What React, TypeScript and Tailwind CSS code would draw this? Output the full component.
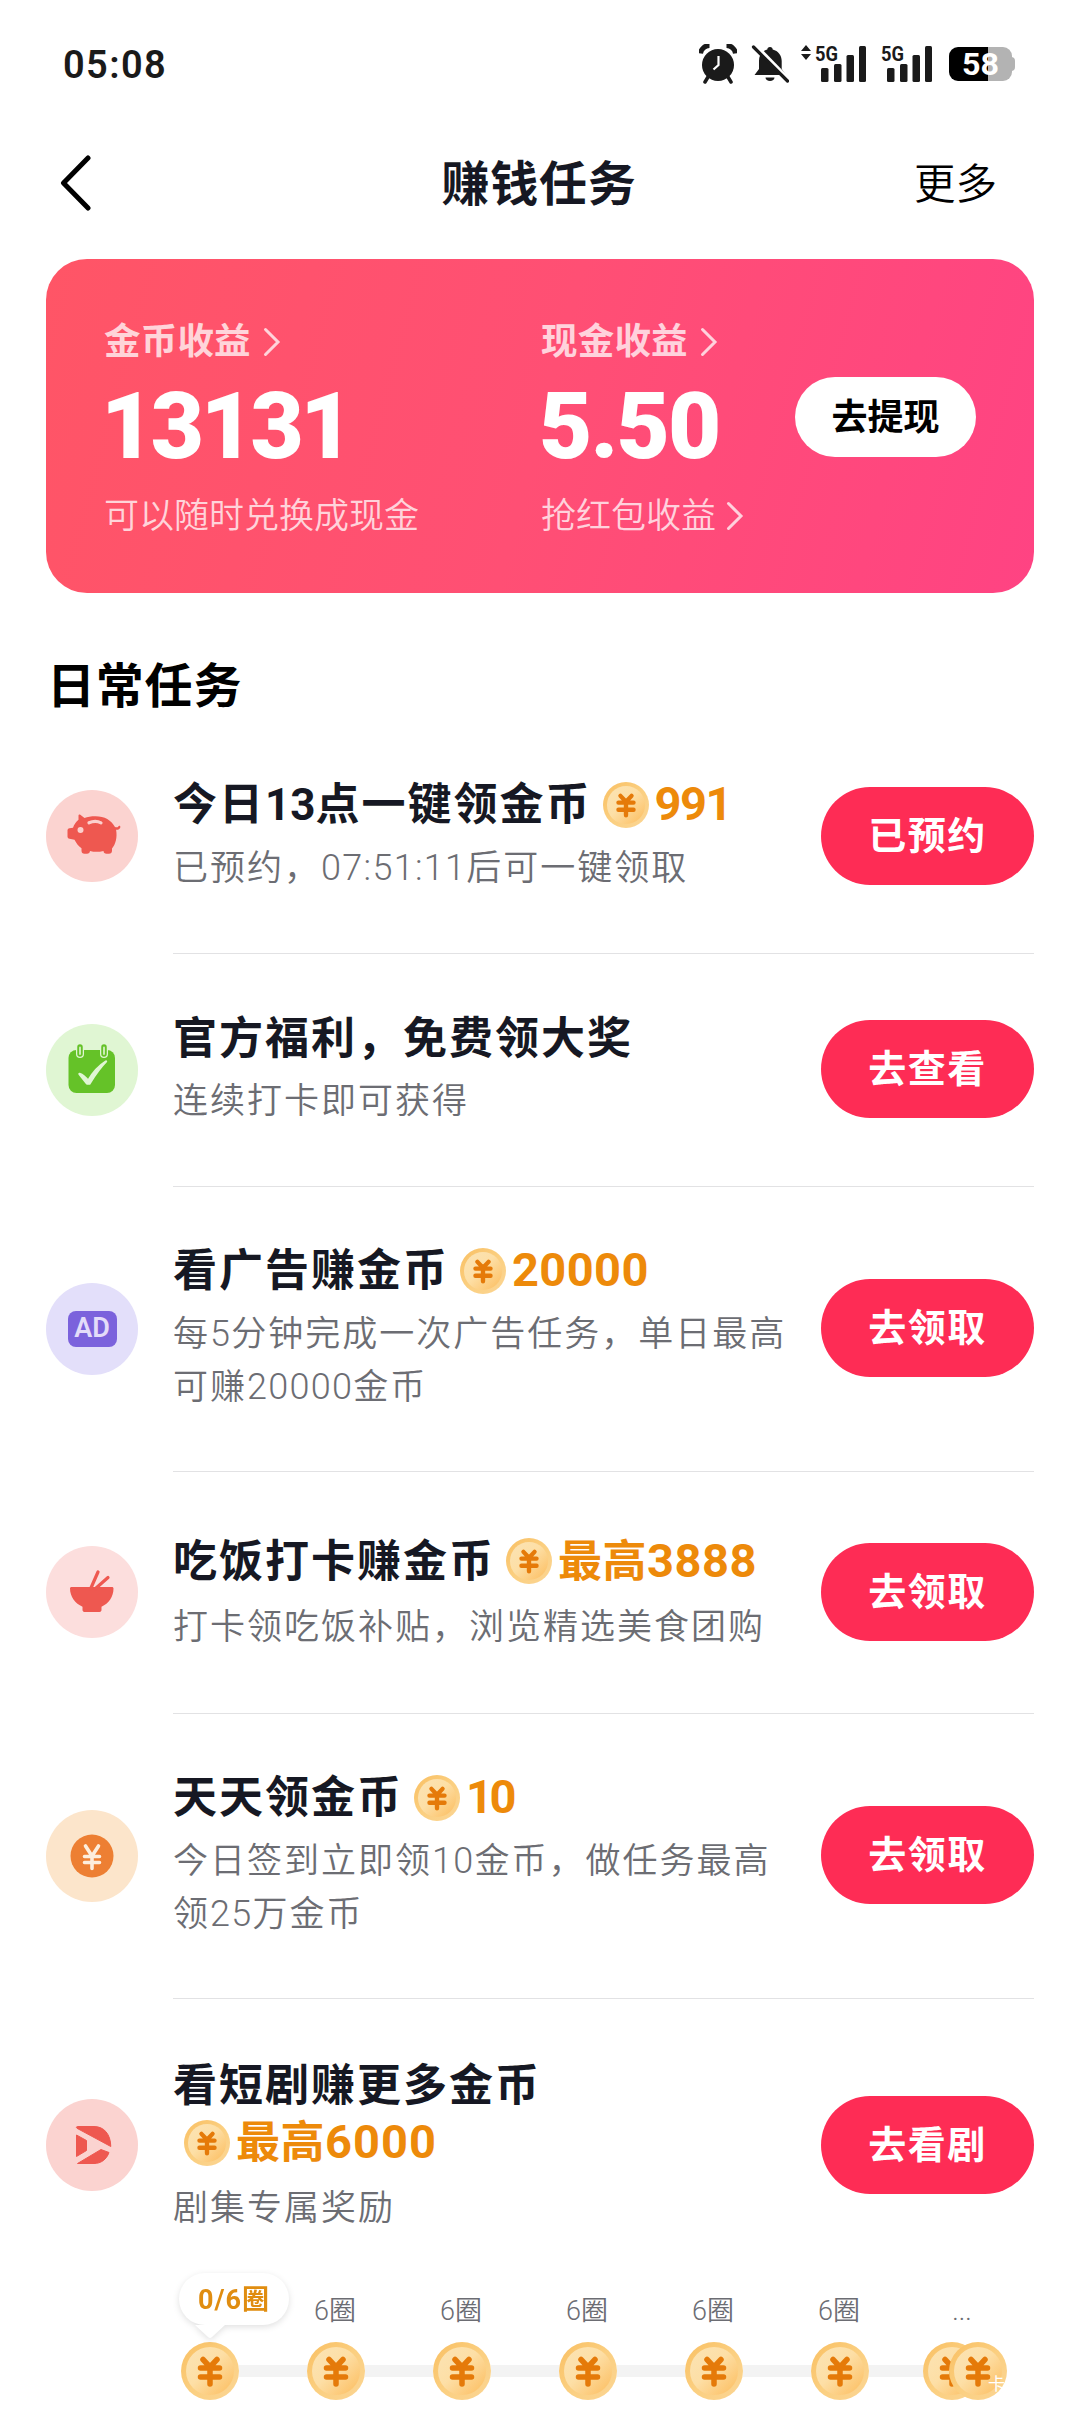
import React, { useId } from 'react';

// Splits a string so that latin/digit runs can get their own size and tracking
function Mixed({ text, latin }: { text: string; latin: string }) {
  return (
    <>
      {text.split(/([0-9A-Za-z:.\/]+)/).map((part, i) =>
        i % 2 === 1 ? (
          <span key={i} className={latin}>
            {part}
          </span>
        ) : (
          part
        )
      )}
    </>
  );
}

function Coin({ className }: { className: string }) {
  const id = useId();
  return (
    <svg viewBox="0 0 58 58" className={className}>
      <defs>
        <linearGradient id={`${id}a`} x1="0" y1="0" x2="1" y2="1">
          <stop offset="0" stopColor="#f9bf62" />
          <stop offset="0.5" stopColor="#fbcf80" />
          <stop offset="1" stopColor="#fbd594" />
        </linearGradient>
        <linearGradient id={`${id}b`} x1="0" y1="0" x2="1" y2="1">
          <stop offset="0" stopColor="#fbe3b4" />
          <stop offset="0.45" stopColor="#fddfa6" />
          <stop offset="1" stopColor="#fcbc5c" />
        </linearGradient>
      </defs>
      <circle cx="29" cy="29" r="29" fill={`url(#${id}a)`} />
      <circle cx="29" cy="29" r="24" fill={`url(#${id}b)`} />
      <path
        d="M22 17.500 29 25l7-7.500M19.500 26h19M19.500 35h19M29 25v17"
        fill="none"
        stroke="#e57a09"
        strokeWidth="5.500"
        strokeLinecap="round"
        strokeLinejoin="round"
      />
    </svg>
  );
}

function Chevron({ className = 'ml-3.5' }: { className?: string }) {
  return (
    <svg viewBox="0 0 18 30" className={`h-[30px] w-[18px] shrink-0 ${className}`}>
      <path d="M2.500 2.500 15 15 2.500 27.500" fill="none" stroke="currentColor" strokeWidth="3" strokeLinecap="round" />
    </svg>
  );
}

function PigIcon() {
  return (
    <svg viewBox="0 0 92 92" className="size-full">
      <path
        d="M32.500 25.500c0-1 1-1.300 1.800-.7l4.200 3.200c3-1.200 6.500-1.800 11-1.800 9 0 16 4 19.500 10.800 1.600.6 2.700.4 3.300-.6.8-1.300 2.500-.4 2 1-.6 1.700-2.200 2.500-4.200 2.300 1.400 8-.6 14.500-4.100 18.800v2.200c0 2-1.200 3-3 3h-2.500c-1.800 0-2.900-1-3-2.800-5 1.200-9 1.200-13.500 0-.2 1.800-1.300 2.800-3 2.800h-2.500c-1.900 0-3-1.100-3-3v-2.400c-3-2.300-5.500-5.400-7-8.600l-5-.9c-1.300-.3-2-1-2-2.300v-6c0-1.200.7-2 2-2.200l3.500-.6c1-3 2.800-5.800 5.500-8z"
        fill="#ee5850"
      />
      <path d="M43 32.800c4-1.800 8.500-1.800 12 0" fill="none" stroke="#fbd0cd" strokeWidth="3.200" strokeLinecap="round" />
      <circle cx="34.500" cy="40" r="3" fill="#fbd0cd" />
    </svg>
  );
}

function CalendarIcon() {
  return (
    <svg viewBox="0 0 92 92" className="size-full">
      <rect x="22.500" y="26" width="46.500" height="43" rx="8" fill="#65c228" />
      <path d="M34 26v4M58 26v4" stroke="#e0f6d3" strokeWidth="8" strokeLinecap="round" />
      <path d="M34 23v7M58 23v7" stroke="#65c228" strokeWidth="5.500" strokeLinecap="round" />
      <path d="M34 23.500v6.500M58 23.500v6.500" stroke="#c9edb2" strokeWidth="2" strokeLinecap="round" />
      <path d="M33.500 50c3 1 6 3.500 8.500 7 4-7 10-14.500 18-19.500-6 6-11.500 14-16.500 22h-2.500z" fill="#e0f6d3" stroke="#e0f6d3" strokeWidth="2.400" strokeLinejoin="round" />
    </svg>
  );
}

function AdIcon() {
  return (
    <div className="mx-auto mt-7 flex h-9 w-[49px] items-center justify-center rounded-lg bg-[#7b62dc] text-[27px] leading-none font-semibold text-[#e3dcf9]">
      AD
    </div>
  );
}

function BowlIcon() {
  return (
    <svg viewBox="0 0 92 92" className="size-full">
      <path d="M25.500 41h40.500c.9 0 1.500.6 1.500 1.500 0 8-4.700 15-12 18.200V64c0 1.300-.9 2-2 2h-15c-1.100 0-2-.7-2-2v-3.300c-7.300-3.200-12.500-10.200-12.500-18.200 0-.9.600-1.500 1.500-1.500z" fill="#ee5850" />
      <path d="M52 26 44.500 43M62 31.500 49 43" stroke="#ee5850" strokeWidth="3.200" strokeLinecap="round" />
    </svg>
  );
}

function YenIcon() {
  return (
    <svg viewBox="0 0 92 92" className="size-full">
      <circle cx="46" cy="46" r="21.500" fill="#ed7f33" />
      <path d="M39.500 36 46 46l6.500-10M38.500 46.500h15M38.500 52.500h15M46 46v12.500" fill="none" stroke="#fdeedd" strokeWidth="3.600" strokeLinecap="round" strokeLinejoin="round" />
    </svg>
  );
}

function PlayIcon() {
  return (
    <svg viewBox="0 0 92 92" className="size-full">
      <g fill="#ee5850" stroke="#ee5850" strokeWidth="1" strokeLinejoin="round">
        <path d="M31.500 27.500H48C58 27.500 64.500 35 64.800 47.500L31 29.300c-1-.7-.6-1.800.5-1.800z" />
        <path d="M30.500 36 40.500 41.500v10l-10 6z" />
        <path d="M31.500 64.500 55 50.500l8 3C60.500 60.500 55 64.500 48 64.500z" />
      </g>
    </svg>
  );
}

function Signal({ arrows }: { arrows?: boolean }) {
  return (
    <svg viewBox="0 0 66 38" className="h-[38px] w-[66px] overflow-visible">
      {arrows && <path d="M5 0l5 6H0zM5 15l5-6H0z" fill="#1a1a1a" />}
      <text x="14" y="15.500" fontSize="21" fontWeight="700" fill="#1a1a1a" textLength="23" lengthAdjust="spacingAndGlyphs">
        5G
      </text>
      <g fill="#1a1a1a">
        <rect x="20" y="23" width="7.500" height="14" rx="1.500" />
        <rect x="33" y="19" width="7.500" height="18" rx="1.500" />
        <rect x="45.500" y="10" width="7.500" height="27" rx="1.500" />
        <rect x="58" y="1" width="7" height="36" rx="1.500" />
      </g>
    </svg>
  );
}

function StatusBar() {
  return (
    <div className="flex h-32 items-center justify-between pr-[65px] pl-[63px]">
      <span className="pt-0.5 text-[38px] leading-none font-semibold tracking-[1.400px] text-[#1a1a1a]">05:08</span>
      <div className="flex items-center">
        <svg viewBox="0 0 38 40" className="mr-3.5 h-10 w-[38px]">
          <circle cx="19" cy="21" r="16" fill="#1a1a1a" />
          <path d="M1.500 9.500A9 9 0 0 1 10.500 1.500M36.500 9.500A9 9 0 0 0 27.500 1.500" fill="none" stroke="#1a1a1a" strokeWidth="5" />
          <path d="M9 33l-3 5M29 33l3 5" stroke="#1a1a1a" strokeWidth="3.500" strokeLinecap="round" />
          <path d="M19.500 12v9l-5 4.500" fill="none" stroke="#fff" strokeWidth="2.200" />
        </svg>
        <svg viewBox="0 0 38 40" className="mr-3 h-10 w-[38px]">
          <path d="M19 3c1.800 0 2.600 1 2.700 2.500 5.500 1.300 9 6 9 11.500v8l4.300 6H3.500L8 25v-8C8 11 11 7 16.300 5.500 16.400 4 17.200 3 19 3z" fill="#1a1a1a" />
          <path d="M14.500 33.500h9c0 2-2 3.500-4.500 3.500s-4.500-1.500-4.500-3.500z" fill="#1a1a1a" />
          <path d="M6 3l33 34" stroke="#fff" strokeWidth="4" />
          <path d="M2.500 3l34 34" stroke="#1a1a1a" strokeWidth="3.200" strokeLinecap="round" />
        </svg>
        <Signal arrows />
        <Signal />
        <svg viewBox="0 0 66 34" className="ml-[16px] h-[34px] w-[66px]">
          <rect x="56" y="10" width="10" height="14" rx="4" fill="#b3b3b3" />
          <path d="M39 0h15a9 9 0 0 1 9 9v16a9 9 0 0 1-9 9H39z" fill="#b3b3b3" />
          <path d="M9 0h30v34H9a9 9 0 0 1-9-9V9a9 9 0 0 1 9-9z" fill="#000" />
          <text x="13" y="28" fontSize="31" fontWeight="700" fill="#fff" textLength="37" lengthAdjust="spacingAndGlyphs">
            58
          </text>
        </svg>
      </div>
    </div>
  );
}

function Header() {
  return (
    <div className="grid h-[110px] grid-cols-3 items-center pr-[83px] pl-[59px]">
      <svg viewBox="0 0 34 56" className="h-14 w-[34px]">
        <path d="M29 3 4.500 28 29 53" fill="none" stroke="#000" strokeWidth="5" strokeLinecap="round" strokeLinejoin="round" />
      </svg>
      <h1 className="ml-[22px] pt-[3px] text-center text-[48px] leading-none font-bold tracking-[0.800px] whitespace-nowrap text-[#161823]">赚钱任务</h1>
      <span className="pt-[3px] text-right text-[41.500px] leading-none font-[350] text-black">更多</span>
    </div>
  );
}

function BalanceCard() {
  return (
    <div className="mx-[46px] mt-[21px] flex h-[334px] rounded-[41px] bg-[linear-gradient(105deg,#ff5566_0%,#ff4f74_50%,#ff4383_100%)] pt-[56px] pl-[58px]">
      <div className="w-[437px] shrink-0">
        <div className="flex h-[54px] items-center text-[36.500px] leading-none font-bold tracking-[0.200px] text-white/75">
          金币收益
          <Chevron className="ml-3" />
        </div>
        <div className="mt-1 -ml-[3px] h-[106px] text-[92px] leading-[108px] font-black tracking-[-3.500px] text-white">13131</div>
        <div className="mt-[10px] flex h-[54px] items-center text-[35px] leading-none font-[350] text-white/75">可以随时兑换成现金</div>
      </div>
      <div className="w-[254px] shrink-0">
        <div className="flex h-[54px] items-center text-[36.500px] leading-none font-bold tracking-[0.200px] text-white/75">
          现金收益
          <Chevron className="ml-3" />
        </div>
        <div className="mt-1 -ml-0.5 h-[106px] text-[92px] leading-[108px] font-black tracking-[-1.800px] text-white">5.50</div>
        <div className="mt-[10px] flex h-[54px] items-center text-[35px] leading-none font-[350] text-white/75">
          抢红包收益
          <Chevron className="ml-2.5" />
        </div>
      </div>
      <button className="mt-[62px] h-20 w-[181px] rounded-full bg-white pt-0.5 text-[36px] leading-none font-bold text-black">去提现</button>
    </div>
  );
}

const tasks = [
  {
    id: 1,
    icon: <PigIcon />,
    iconBg: 'bg-[#fbd3d0]',
    title: '今日13点一键领金币',
    reward: '991',
    rewardLatin: 'text-[47px] tracking-[-1.500px]',
    desc: '已预约，07:51:11后可一键领取',
    action: '已预约',
    height: 'h-[234px]',
    line: 'leading-[51px]'
  },
  {
    id: 2,
    icon: <CalendarIcon />,
    iconBg: 'bg-[#e0f6d3]',
    title: '官方福利，免费领大奖',
    desc: '连续打卡即可获得',
    action: '去查看',
    height: 'h-[233px]',
    line: 'leading-[51px]'
  },
  {
    id: 3,
    icon: <AdIcon />,
    iconBg: 'bg-[#e3dffa]',
    title: '看广告赚金币',
    reward: '20000',
    rewardLatin: 'text-[47px] tracking-[0.400px]',
    desc: '每5分钟完成一次广告任务，单日最高可赚20000金币',
    action: '去领取',
    height: 'h-[285px]',
    line: 'leading-[51px]'
  },
  {
    id: 4,
    icon: <BowlIcon />,
    iconBg: 'bg-[#fcdedd]',
    title: '吃饭打卡赚金币',
    reward: '最高3888',
    rewardLatin: 'text-[47px]',
    desc: '打卡领吃饭补贴，浏览精选美食团购',
    action: '去领取',
    height: 'h-[242px]',
    line: 'leading-[57px]'
  },
  {
    id: 5,
    icon: <YenIcon />,
    iconBg: 'bg-[#fce5cb]',
    title: '天天领金币',
    reward: '10',
    rewardLatin: 'text-[47px] tracking-[-3.500px]',
    desc: '今日签到立即领10金币，做任务最高领25万金币',
    action: '去领取',
    height: 'h-[285px]',
    line: 'leading-[51px]'
  },
  {
    id: 6,
    icon: <PlayIcon />,
    iconBg: 'bg-[#fbd3d0]',
    title: '看短剧赚更多金币',
    reward: '最高6000',
    rewardLatin: 'text-[47px] tracking-[1px]',
    desc: '剧集专属奖励',
    action: '去看剧',
    height: 'h-[294px]',
    line: 'leading-[57px]'
  }
];

function TaskList() {
  return (
    <div className="px-[46px]">
      {tasks.map((task, index) => (
        <div key={task.id} className={`flex items-center ${task.height}`}>
          <div className={`mr-[35px] mb-0.5 size-[92px] shrink-0 overflow-hidden rounded-full ${task.iconBg}`}>{task.icon}</div>
          <div className={`flex h-full flex-1 items-center border-b pb-0.5 ${index === tasks.length - 1 ? 'border-transparent' : 'border-[#e2e2e4]'}`}>
            <div className="w-[620px] shrink-0">
              <div className={`flex flex-wrap items-center pt-1 text-[44px] font-bold ${task.line}`}>
                <span className="tracking-[2px] text-[#161823]">
                  <Mixed text={task.title} latin="tracking-[0px]" />
                </span>
                {task.reward && (
                  <span className="-mt-0.5 ml-[11px] flex items-center text-[#ed8a0a]">
                    <Coin className="mr-[6px] size-[46px]" />
                    <span className="tracking-[0.500px]">
                      <Mixed text={task.reward} latin={task.rewardLatin} />
                    </span>
                  </span>
                )}
              </div>
              <p className="mt-[11px] text-[35px] leading-[52px] font-[350] tracking-[2px] text-[#6c6d73]">
                <Mixed text={task.desc} latin="text-[36px] tracking-[1.300px]" />
              </p>
            </div>
            <button className="ml-auto h-[98px] w-[213px] rounded-full bg-[#fe2c55] text-[38px] leading-none font-bold tracking-[1.500px] text-white">
              {task.action}
            </button>
          </div>
        </div>
      ))}
    </div>
  );
}

function Progress() {
  const steps = ['', '6圈', '6圈', '6圈', '6圈', '6圈'];
  return (
    <div className="-mt-5 flex items-end pl-[181px]">
      {steps.map((label, i) => (
        <React.Fragment key={i}>
          <div className="relative flex w-[58px] shrink-0 flex-col items-center">
            <div className="flex h-[69px] items-center pt-2 pr-0.5 text-[27px] leading-none font-[350] whitespace-nowrap text-[#6c6d73]">{label}</div>
            {i === 0 && (
              <div className="absolute top-0 -left-0.5 drop-shadow-[0_2px_3px_rgba(0,0,0,0.12)]">
                <div className="flex h-[52px] w-[110px] items-center justify-center rounded-full bg-white pt-0.5 text-[27px] leading-none font-bold tracking-[1px] text-[#e08d10]">
                  0/6圈
                </div>
                <svg viewBox="0 0 30 14" className="ml-4 h-3.5 w-[30px]">
                  <path d="M0 0h30L17 12q-2 2-4 0z" fill="#fff" />
                </svg>
              </div>
            )}
            <Coin className="size-[58px]" />
          </div>
          <div className={`mb-[23px] h-3 shrink-0 bg-[#f3f3f3] ${i === 5 ? 'w-[55px]' : 'w-[68px]'}`} />
        </React.Fragment>
      ))}
      <div className="relative -ml-px flex w-[84px] flex-col items-center">
        <div className="flex h-[69px] items-center pt-2 pr-1.5 text-[27px] leading-none font-[350] text-[#6c6d73]">...</div>
        <div className="flex">
          <Coin className="size-[58px] shrink-0" />
          <Coin className="-ml-8 size-[58px] shrink-0" />
        </div>
        <span className="absolute top-[103px] left-[65px] text-[17px] leading-none whitespace-nowrap text-white">卡农</span>
      </div>
    </div>
  );
}

export default function App() {
  return (
    <div className="h-[2414px] w-[1080px] overflow-hidden bg-white font-['Roboto','Noto_Sans_CJK_SC',sans-serif]">
      <StatusBar />
      <Header />
      <BalanceCard />
      <h2 className="mt-[68px] mb-[7px] pl-[47px] text-[48px] leading-[52px] font-bold tracking-[0.800px] text-black">日常任务</h2>
      <TaskList />
      <Progress />
    </div>
  );
}
